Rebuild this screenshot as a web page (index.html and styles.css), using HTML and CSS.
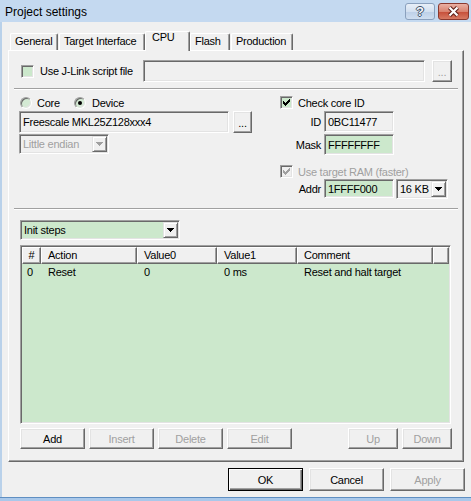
FILE: index.html
```html
<!DOCTYPE html>
<html lang="en">
<head>
<meta charset="utf-8">
<title>Project settings</title>
<link rel="stylesheet" href="styles.css">
</head>
<body>
<div class="window">
  <div class="titlebar">
    <span class="title">Project settings</span>
    <div class="caption-btns">
      <div class="cap-btn help"><span>?</span></div>
      <div class="cap-btn close">
        <svg width="29" height="15" viewBox="0 0 29 15"><path d="M10.5 3.5 L18.5 11.5 M18.5 3.5 L10.5 11.5" stroke="#5a1d16" stroke-width="4.2"/><path d="M10.5 3.5 L18.5 11.5 M18.5 3.5 L10.5 11.5" stroke="#fff" stroke-width="2.2"/></svg>
      </div>
    </div>
  </div>
  <div class="client">
    <div class="tabs">
      <div class="tab w-general">General</div>
      <div class="tab w-target">Target Interface</div>
      <div class="tab selected">CPU</div>
      <div class="tab w-flash">Flash</div>
      <div class="tab w-prod">Production</div>
    </div>
    <div class="panel">
      <div class="script-row">
        <span class="chk green"></span>
        <span class="script-lbl">Use J-Link script file</span>
        <div class="edit script-edit"></div>
        <div class="btn dots disabled">...</div>
      </div>
      <div class="sep"></div>
      <div class="mid">
        <div class="col-left">
          <div class="radio-row">
            <span class="radio"></span><span class="core-lbl">Core</span>
            <span class="radio on"></span><span class="device-lbl">Device</span>
          </div>
          <div class="device-row">
            <div class="edit device-edit">Freescale MKL25Z128xxx4</div>
            <div class="btn dots dev-dots">...</div>
          </div>
          <div class="combo endian disabled">
            <span>Little endian</span>
            <span class="arrow"><svg width="7" height="4" viewBox="0 0 7 4"><path d="M0 0H7V1H6V2H5V3H4V4H3V3H2V2H1V1H0Z" fill="#a0a0a0"/></svg></span>
          </div>
        </div>
        <div class="col-right">
          <div class="chk-row">
            <span class="chk green"><svg width="11" height="11" viewBox="0 0 11 11"><path d="M8 2h1v1h-1z M7 3h2v1h-2z M2 4h1v1h-1z M6 4h3v1h-3z M2 5h2v1h-2z M5 5h3v1h-3z M2 6h5v1h-5z M3 7h3v1h-3z M4 8h1v1h-1z" fill="#000"/></svg></span>
            <span class="chk-lbl">Check core ID</span>
          </div>
          <div class="field-row">
            <span class="flbl">ID</span>
            <div class="edit small-edit">0BC11477</div>
          </div>
          <div class="field-row">
            <span class="flbl">Mask</span>
            <div class="edit small-edit green">FFFFFFFF</div>
          </div>
          <div class="chk-row ram-row disabled">
            <span class="chk"><svg width="11" height="11" viewBox="0 0 11 11"><path d="M8 2h1v1h-1z M7 3h2v1h-2z M2 4h1v1h-1z M6 4h3v1h-3z M2 5h2v1h-2z M5 5h3v1h-3z M2 6h5v1h-5z M3 7h3v1h-3z M4 8h1v1h-1z" fill="#a0a0a0"/></svg></span>
            <span class="chk-lbl">Use target RAM (faster)</span>
          </div>
          <div class="field-row addr-row">
            <span class="flbl">Addr</span>
            <div class="edit small-edit addr-edit green">1FFFF000</div>
            <div class="combo size-combo">
              <span>16 KB</span>
              <span class="arrow"><svg width="7" height="4" viewBox="0 0 7 4"><path d="M0 0H7V1H6V2H5V3H4V4H3V3H2V2H1V1H0Z" fill="#000"/></svg></span>
            </div>
          </div>
        </div>
      </div>
      <div class="sep sep-flush"></div>
      <div class="combo init-combo green">
        <span>Init steps</span>
        <span class="arrow"><svg width="7" height="4" viewBox="0 0 7 4"><path d="M0 0H7V1H6V2H5V3H4V4H3V3H2V2H1V1H0Z" fill="#000"/></svg></span>
      </div>
      <div class="table">
        <div class="thead">
          <div class="th center">#</div>
          <div class="th">Action</div>
          <div class="th">Value0</div>
          <div class="th">Value1</div>
          <div class="th">Comment</div>
          <div class="th"></div>
        </div>
        <div class="tr">
          <div class="td num">0</div>
          <div class="td">Reset</div>
          <div class="td">0</div>
          <div class="td">0 ms</div>
          <div class="td">Reset and halt target</div>
          <div class="td"></div>
        </div>
      </div>
      <div class="btnrow">
        <div class="btn pbtn">Add</div>
        <div class="btn pbtn disabled">Insert</div>
        <div class="btn pbtn disabled">Delete</div>
        <div class="btn pbtn disabled">Edit</div>
        <div class="btn sbtn up disabled">Up</div>
        <div class="btn sbtn disabled">Down</div>
      </div>
    </div>
    <div class="footer">
      <div class="btn fbtn default">OK</div>
      <div class="btn fbtn">Cancel</div>
      <div class="btn fbtn disabled">Apply</div>
    </div>
  </div>
  <div class="frame-bottom"></div>
</div>
</body>
</html>
```

FILE: styles.css
```css
* { box-sizing: border-box; }
html, body { margin: 0; padding: 0; }
body {
  width: 471px;
  height: 501px;
  overflow: hidden;
  background: #f0f0f0;
  font-family: "Liberation Sans", Arial, sans-serif;
  font-size: 11px;
  letter-spacing: -0.25px;
  color: #000;
}
.window { width: 471px; height: 501px; display: flex; flex-direction: column; }

/* title bar */
.titlebar { height: 22px; flex: none; display: flex; align-items: flex-start; background: #c4d9f0; }
.title { flex: 1; font-size: 12px; letter-spacing: 0; line-height: 16px; margin: 4px 0 0 5px; }
.caption-btns { display: flex; gap: 3px; margin: 3px 2px 0 0; }
.cap-btn { height: 17px; border-radius: 3px; display: flex; align-items: center; justify-content: center; }
.help {
  width: 30px;
  border: 1px solid #8aa0bd;
  background: linear-gradient(#e8eff8, #d3e0f0 50%, #bccfe7 51%, #cfdef0);
}
.help span {
  font-family: "Liberation Sans", Arial, sans-serif;
  font-weight: bold; font-size: 13px; line-height: 13px; letter-spacing: 0;
  color: #f4f7fb;
  text-shadow: 1px 0 0 #3d4e66, -1px 0 0 #3d4e66, 0 1px 0 #3d4e66, 0 -1px 0 #3d4e66;
}
.close {
  width: 31px;
  border: 1px solid #8a392f;
  background: linear-gradient(#eab0a3, #d98370 50%, #c64d38 51%, #d77a63);
}
.close svg { display: block; }

/* client */
.client { flex: 1; display: flex; flex-direction: column; border-left: 2px solid #b9d1ea; }
.frame-bottom { height: 4px; flex: none; background: #a9c8ea; border-top: 1px solid #5f8fc2; }

/* tabs */
.tabs { display: flex; align-items: flex-end; height: 19px; margin-top: 9px; padding-left: 8px; flex: none; }
.tab {
  height: 17px;
  border: 1px solid;
  border-bottom: 0;
  border-color: #fff #696969 #fff #fff;
  box-shadow: inset -1px 0 0 #a0a0a0;
  border-radius: 2px 2px 0 0;
  padding-left: 4px;
  line-height: 15px;
  white-space: nowrap;
  background: #f0f0f0;
}
.w-general { width: 48px; }
.w-target { width: 86px; margin-left: 1px; }
.tab.selected {
  position: relative;
  width: 45px;
  height: 20px;
  margin-bottom: -1px;
  padding-left: 6px;
  line-height: 11px;
}
.w-flash { width: 40px; }
.w-prod { width: 62px; margin-left: 1px; }

/* panel */
.panel {
  flex: none;
  margin-left: 6px;
  width: 456px;
  height: 412px;
  border: 1px solid;
  border-color: #fff #696969 #696969 #fff;
  box-shadow: inset -1px -1px 0 #a0a0a0;
  padding-top: 9px;
  display: flex;
  flex-direction: column;
}

/* common controls */
.edit {
  display: flex;
  align-items: center;
  height: 22px;
  border: 1px solid;
  border-color: #a0a0a0 #fff #fff #a0a0a0;
  box-shadow: inset 1px 1px 0 #696969, inset -1px -1px 0 #e3e3e3;
  background: #f0f0f0;
  padding-left: 3px;
  white-space: nowrap;
  flex: none;
}
.green { background: #cce8cc; }
.disabled { color: #a0a0a0; }

.chk {
  display: block;
  flex: none;
  width: 13px;
  height: 13px;
  border: 1px solid;
  border-color: #a0a0a0 #fff #fff #a0a0a0;
  box-shadow: inset 1px 1px 0 #696969, inset -1px -1px 0 #e3e3e3;
  background: #f0f0f0;
}
.chk.green { background: #cce8cc; }
.chk svg { display: block; }

.radio {
  flex: none;
  width: 12px;
  height: 12px;
  border-radius: 50%;
  border: 1px solid;
  border-color: #a0a0a0 #fff #fff #a0a0a0;
  box-shadow: inset 1px 1px 0 #696969, inset -1px -1px 0 #e3e3e3;
  background: #d4ead4;
  display: flex;
  align-items: center;
  justify-content: center;
}
.radio.on::after { content: ""; width: 4px; height: 4px; border-radius: 50%; background: #000; }

.btn {
  flex: none;
  display: flex;
  align-items: center;
  justify-content: center;
  border: 1px solid;
  border-color: #fff #696969 #696969 #fff;
  box-shadow: inset -1px -1px 0 #a0a0a0, inset 1px 1px 0 #e3e3e3;
  background: #f0f0f0;
  white-space: nowrap;
}
.btn.default {
  border-color: #000;
  box-shadow: inset 1px 1px 0 #fff, inset -1px -1px 0 #696969, inset -2px -2px 0 #a0a0a0;
}
.dots { align-items: flex-end; padding-bottom: 3px; }

.combo {
  flex: none;
  display: flex;
  align-items: center;
  justify-content: space-between;
  height: 20px;
  border: 1px solid;
  border-color: #a0a0a0 #fff #fff #a0a0a0;
  box-shadow: inset 1px 1px 0 #696969, inset -1px -1px 0 #e3e3e3;
  background: #f0f0f0;
  padding-left: 3px;
  white-space: nowrap;
}
.combo.green { background: #cce8cc; }
.arrow {
  width: 15px;
  height: 16px;
  margin-right: 1px;
  border: 1px solid;
  border-color: #e3e3e3 #696969 #696969 #e3e3e3;
  box-shadow: inset 1px 1px 0 #fff, inset -1px -1px 0 #a0a0a0;
  background: #f0f0f0;
  display: flex;
  align-items: center;
  justify-content: center;
}
.arrow svg { display: block; }

.sep {
  flex: none;
  margin: 6px 0 0 5px;
  width: 444px;
  height: 2px;
  border-top: 1px solid #a0a0a0;
  border-bottom: 1px solid #fff;
}
.sep.sep-flush { margin-top: 0; }

/* script row */
.script-row { display: flex; align-items: center; height: 22px; flex: none; }
.script-row .chk { margin-left: 12px; }
.script-lbl { margin-left: 6px; width: 103px; white-space: nowrap; }
.script-edit { width: 282px; }
.script-row .dots { margin-left: 7px; width: 20px; height: 22px; }

/* middle */
.mid { display: flex; height: 118px; padding-left: 10px; flex: none; }
.col-left { width: 261px; display: flex; flex-direction: column; }
.col-right { display: flex; flex-direction: column; }

.radio-row { display: flex; align-items: center; height: 13px; margin-top: 6px; }
.radio-row .radio { margin-left: 1px; }
.radio-row .radio.on { margin-left: 0; }
.core-lbl { margin-left: 5px; width: 37px; }
.device-lbl { margin-left: 6px; }

.device-row { display: flex; margin-top: 2px; height: 22px; }
.device-edit { width: 210px; }
.dev-dots { margin-left: 4px; width: 19px; height: 22px; }

.endian { margin-top: 1px; width: 90px; }

.chk-row { display: flex; align-items: center; height: 13px; margin-top: 6px; }
.chk-lbl { margin-left: 5px; white-space: nowrap; }
.ram-row { margin-top: 10px; }

.field-row { display: flex; align-items: flex-start; margin-top: 2px; }
.flbl { width: 44px; text-align: right; padding-right: 3px; align-self: center; }
.small-edit { width: 70px; height: 21px; }
.addr-row { margin-top: 1px; }
.addr-edit { height: 19px; }
.size-combo { margin-left: 2px; width: 52px; }

/* init steps */
.init-combo { margin: 10px 0 0 11px; width: 160px; }

.table {
  flex: none;
  margin: 5px 0 0 11px;
  width: 431px;
  height: 179px;
  border: 1px solid;
  border-color: #a0a0a0 #fff #fff #a0a0a0;
  box-shadow: inset 1px 1px 0 #696969, inset -1px -1px 0 #e3e3e3;
  background: #cce8cc;
  padding: 1px;
}
.thead, .tr { display: grid; grid-template-columns: 19px 96px 80px 80px 136px 1fr; }
.th {
  height: 17px;
  border: 1px solid;
  border-color: #fff #696969 #696969 #fff;
  box-shadow: inset -1px -1px 0 #a0a0a0;
  background: #f0f0f0;
  padding-left: 6px;
  line-height: 15px;
  white-space: nowrap;
}
.th.center { padding-left: 0; text-align: center; }
.td { height: 17px; line-height: 17px; padding-left: 7px; white-space: nowrap; }
.td.num { padding-left: 5px; }

.btnrow { display: flex; gap: 4px; height: 21px; margin: 4px 0 0 11px; flex: none; }
.pbtn { width: 65px; }
.sbtn { width: 50px; }
.up { margin-left: 52px; }

/* footer */
.footer { display: flex; justify-content: flex-end; gap: 6px; padding-right: 6px; margin-top: 6px; flex: none; }
.fbtn { width: 75px; height: 23px; }
```
